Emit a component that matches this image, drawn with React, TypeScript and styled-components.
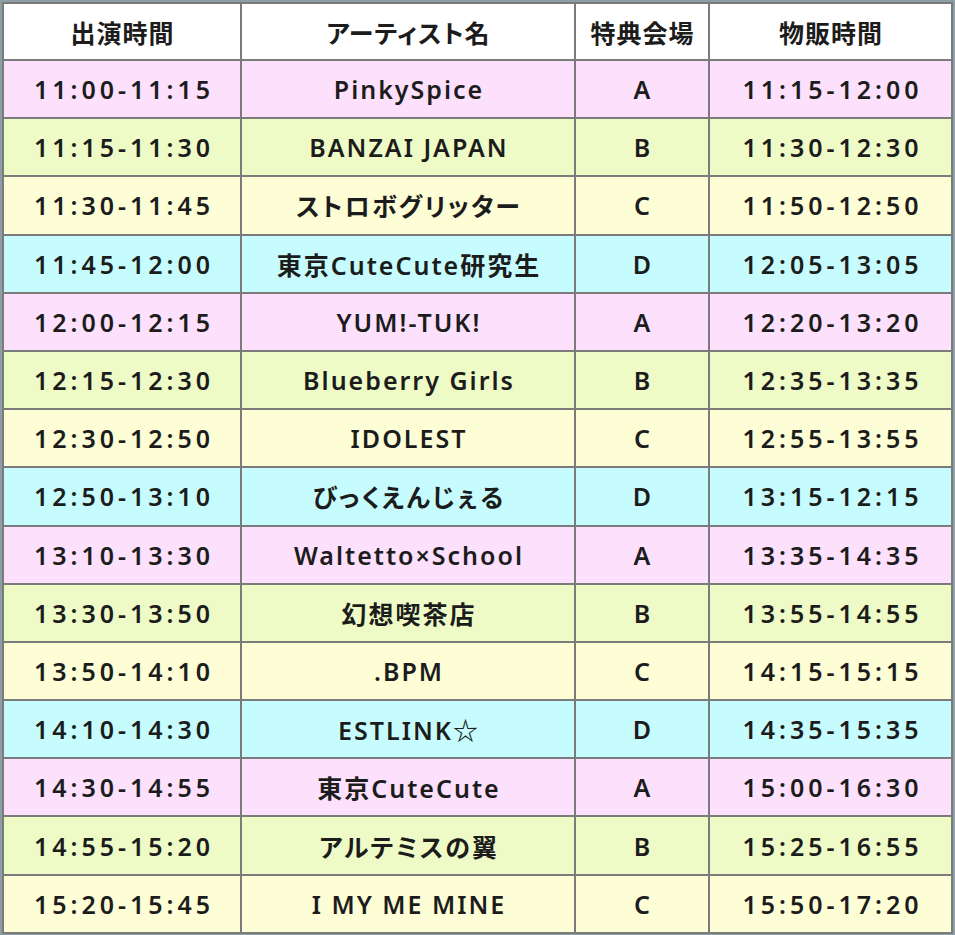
import styled, { createGlobalStyle } from "styled-components";

const GlobalStyle = createGlobalStyle`
    html, body {
        margin: 0;
        padding: 0;
        background: #8c9ea6;
    }
`;

type Tone = "pink" | "green" | "yellow" | "cyan" | "white";

const tones: Record<Tone, string> = {
    pink: "#fce0fc",
    green: "#eefbc6",
    yellow: "#fdfdd6",
    cyan: "#c6fcfd",
    white: "#ffffff",
};

const cycle: Tone[] = ["pink", "green", "yellow", "cyan"];

const rows = [
    ["11:00-11:15", "PinkySpice", "A", "11:15-12:00"],
    ["11:15-11:30", "BANZAI JAPAN", "B", "11:30-12:30"],
    ["11:30-11:45", "ストロボグリッター", "C", "11:50-12:50"],
    ["11:45-12:00", "東京CuteCute研究生", "D", "12:05-13:05"],
    ["12:00-12:15", "YUM!-TUK!", "A", "12:20-13:20"],
    ["12:15-12:30", "Blueberry Girls", "B", "12:35-13:35"],
    ["12:30-12:50", "IDOLEST", "C", "12:55-13:55"],
    ["12:50-13:10", "びっくえんじぇる", "D", "13:15-12:15"],
    ["13:10-13:30", "Waltetto×School", "A", "13:35-14:35"],
    ["13:30-13:50", "幻想喫茶店", "B", "13:55-14:55"],
    ["13:50-14:10", ".BPM", "C", "14:15-15:15"],
    ["14:10-14:30", "ESTLINK☆", "D", "14:35-15:35"],
    ["14:30-14:55", "東京CuteCute", "A", "15:00-16:30"],
    ["14:55-15:20", "アルテミスの翼", "B", "15:25-16:55"],
    ["15:20-15:45", "I MY ME MINE", "C", "15:50-17:20"],
];

const Page = styled.div`
    padding: 2px;
`;

const Table = styled.div`
    display: grid;
    grid-template-columns: 236px 332px 132px 241px;
    grid-template-rows: 55px repeat(15, 56.2px);
    gap: 2px;
    padding: 2px;
    width: max-content;
    background: #7b7b7b;
    font-family: "Noto Sans", "Noto Sans CJK JP", sans-serif;
    font-weight: 600;
    font-size: 25px;
    font-feature-settings: "palt";
    color: #1c1c1c;
`;

const Cell = styled.div<{ $tone: Tone; $time?: boolean }>`
    display: flex;
    align-items: center;
    justify-content: center;
    background: ${(p) => tones[p.$tone]};
    letter-spacing: ${(p) => (p.$time ? "4px" : "2px")};
    padding-left: ${(p) => (p.$time ? "4px" : "2px")};
    white-space: nowrap;
`;

const HeadCell = styled(Cell)`
    letter-spacing: 1px;
    padding-left: 1px;
`;

const headers = ["出演時間", "アーティスト名", "特典会場", "物販時間"];

export default function App() {
    return (
        <>
            <GlobalStyle />
            <Page>
                <Table>
                    {headers.map((h) => (
                        <HeadCell key={h} $tone="white">
                            {h}
                        </HeadCell>
                    ))}
                    {rows.map((r, i) =>
                        r.map((v, j) => (
                            <Cell
                                key={`${i}-${j}`}
                                $tone={cycle[i % 4]}
                                $time={j === 0 || j === 3}
                            >
                                {v}
                            </Cell>
                        ))
                    )}
                </Table>
            </Page>
        </>
    );
}
